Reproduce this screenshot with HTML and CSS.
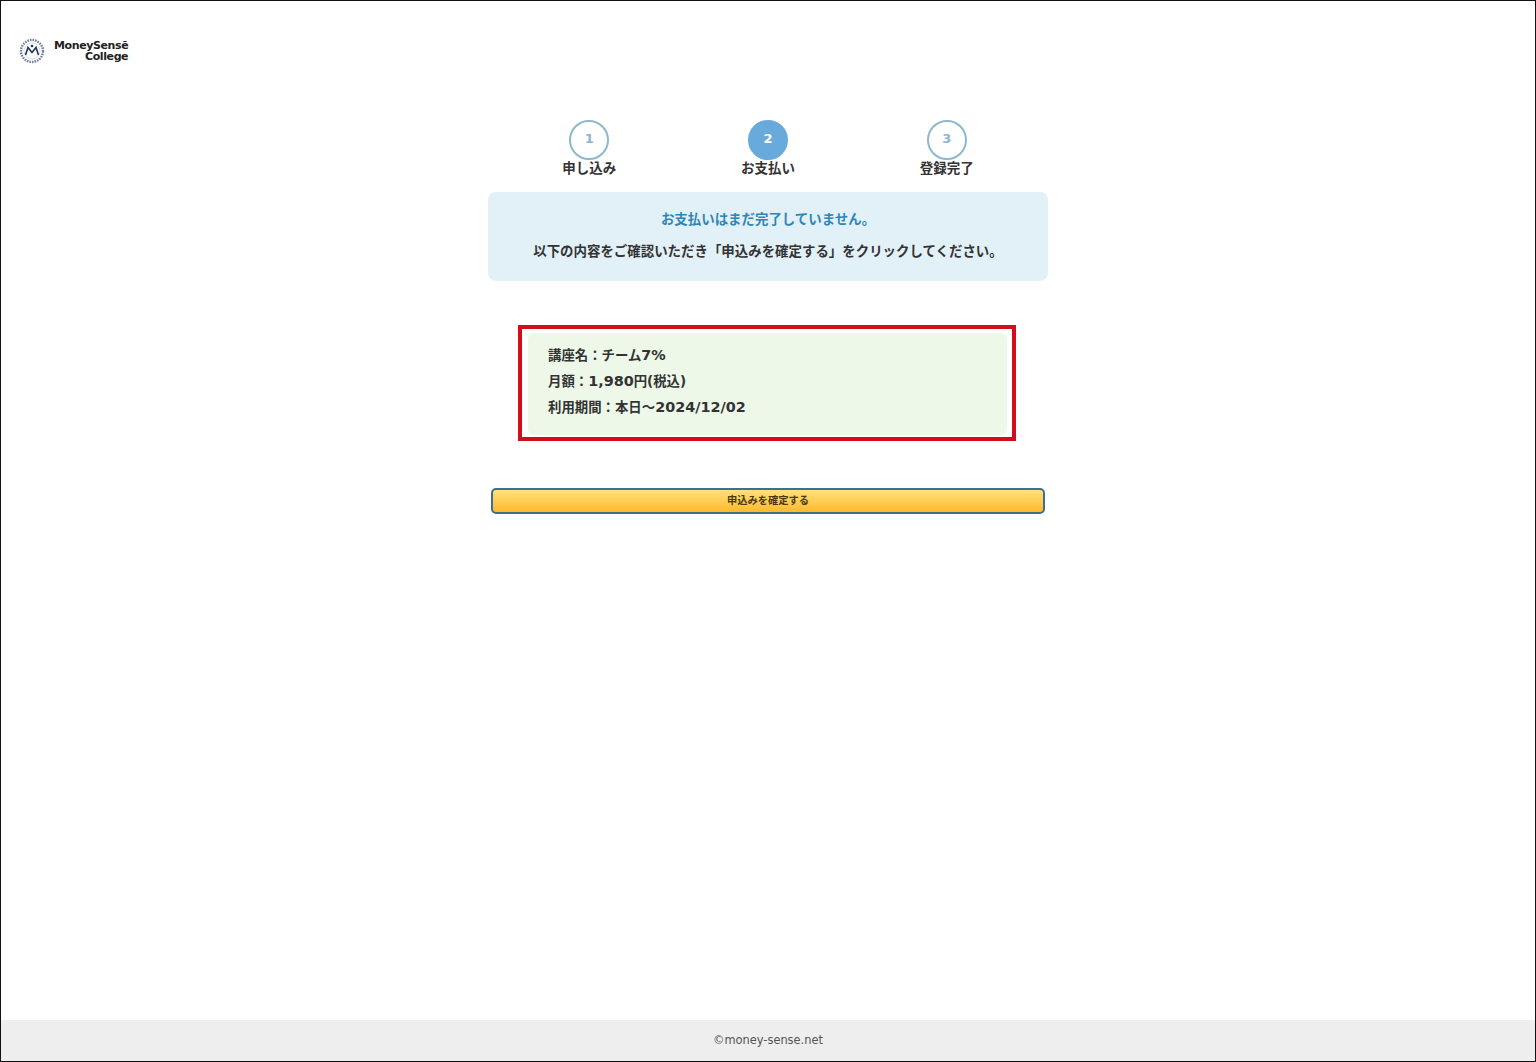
FILE: index.html
```html
<!DOCTYPE html>
<html lang="ja">
<head>
    <meta charset="UTF-8">
    <meta name="viewport" content="width=device-width, initial-scale=1.0">
    <title>MoneySense College</title>
    <link rel="stylesheet" href="styles.css">
</head>
<body>
    <div class="page">
        <header class="site-header">
            <svg class="logo-mark" width="26" height="26" viewBox="0 0 26 26" aria-hidden="true">
                <circle cx="13" cy="13" r="11" fill="none" stroke="#6f80a0" stroke-width="2.4" stroke-dasharray="1.6 1"/>
                <circle cx="13" cy="13" r="8" fill="#fff" stroke="#c3ccd8" stroke-width="0.6"/>
                <path d="M6.5 17 L9 9.5 L13 14.5 L17 9.5 L19.5 17" fill="none" stroke="#1d3560" stroke-width="1.6"/>
                <circle cx="13" cy="8" r="1.3" fill="#1d3560"/>
            </svg>
            <div class="logo-text">
                <span>MoneySensē</span>
                <span>College</span>
            </div>
        </header>

        <main class="content">
            <div class="steps">
                <div class="step">
                    <div class="step-num">1</div>
                    <div class="step-label">申し込み</div>
                </div>
                <div class="step active">
                    <div class="step-num">2</div>
                    <div class="step-label">お支払い</div>
                </div>
                <div class="step">
                    <div class="step-num">3</div>
                    <div class="step-label">登録完了</div>
                </div>
            </div>

            <div class="notice">
                <p class="notice-title">お支払いはまだ完了していません。</p>
                <p class="notice-text">以下の内容をご確認いただき「申込みを確定する」をクリックしてください。</p>
            </div>

            <div class="highlight">
                <div class="course">
                    <p>講座名：チーム<span class="num">7%</span></p>
                    <p>月額：<span class="num">1,980</span>円(税込)</p>
                    <p>利用期間：本日～<span class="num">2024/12/02</span></p>
                </div>
            </div>

            <button class="button" type="button">申込みを確定する</button>
        </main>

        <footer class="site-footer">©money-sense.net</footer>
    </div>
</body>
</html>
```

FILE: styles.css
```css
* {
    box-sizing: border-box;
}
body {
    font-family: "DejaVu Sans", "Noto Sans CJK JP", sans-serif;
    margin: 0;
    padding: 0;
    background-color: #fff;
    color: #333;
}
.page {
    display: flex;
    flex-direction: column;
    height: 100vh;
    border: 1px solid #111;
}
.site-header {
    display: flex;
    align-items: center;
    gap: 9px;
    height: 119px;
    padding: 0 0 20px 18px;
}
.logo-text {
    display: flex;
    flex-direction: column;
    align-items: flex-end;
    font-size: 11px;
    line-height: 11px;
    font-weight: 700;
    letter-spacing: -0.4px;
    color: #222;
}
.content {
    flex: 1;
    display: flex;
    flex-direction: column;
    align-items: center;
}
.steps {
    display: flex;
    justify-content: center;
    width: 536px;
}
.step {
    flex: 1;
    display: flex;
    flex-direction: column;
    align-items: center;
}
.step-num {
    width: 40px;
    height: 40px;
    border: 2px solid #8fb8cc;
    border-radius: 50%;
    display: flex;
    align-items: center;
    justify-content: center;
    padding-bottom: 3px;
    font-size: 13px;
    font-weight: 700;
    color: #8fb3d0;
}
.step.active .step-num {
    background-color: #69aadc;
    border-color: #69aadc;
    color: #fff;
}
.step-label {
    margin-top: 0;
    font-size: 13.5px;
    line-height: 17px;
    font-weight: 700;
    color: #333;
}
.notice {
    width: 560px;
    height: 89px;
    margin-top: 15px;
    padding-top: 18px;
    background-color: #e2f0f7;
    border-radius: 8px;
    text-align: center;
    font-size: 13.45px;
    font-weight: 700;
}
.notice p {
    margin: 0;
    line-height: 20px;
}
.notice-title {
    color: #2e86b8;
}
.notice .notice-text {
    margin-top: 12px;
}
.highlight {
    width: 498px;
    height: 116px;
    margin-top: 44px;
    margin-left: -2px;
    padding: 4px 5px 2px 6px;
    border: 4px solid #d40d1a;
}
.course {
    height: 102px;
    padding: 10px 20px;
    background-color: #edf8e8;
    border-radius: 6px;
    font-size: 13.4px;
    font-weight: 700;
}
.course p {
    margin: 0;
    height: 26px;
    line-height: 26px;
}
.num {
    font-size: 14.4px;
    line-height: 1;
}
.button {
    width: 554px;
    height: 26px;
    margin-top: 47px;
    padding: 0 0 3px;
    background: linear-gradient(to bottom, #ffe27a, #fdb92e);
    border: 2px solid #3f6f8f;
    border-radius: 5px;
    color: #4a3a10;
    font-family: inherit;
    font-size: 10.25px;
    font-weight: 700;
    cursor: pointer;
}
.site-footer {
    height: 41px;
    padding-bottom: 2px;
    display: flex;
    align-items: center;
    justify-content: center;
    background-color: #eee;
    font-size: 11.4px;
    color: #555;
}
```
